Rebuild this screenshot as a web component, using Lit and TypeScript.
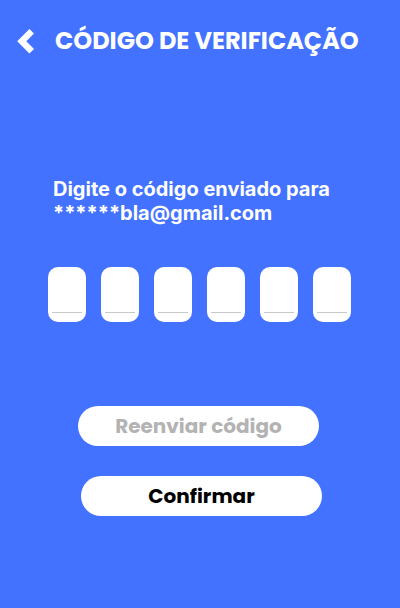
import { LitElement, html, css } from "lit";
import { customElement, state } from "lit/decorators.js";

@customElement("app-root")
export class AppRoot extends LitElement {
  @state() private code: string[] = ["", "", "", "", "", ""];

  static styles = css`
    :host {
      display: block;
      min-height: 100vh;
      box-sizing: border-box;
      background: #4272ff;
      color: #fff;
      font-family: Poppins, Inter, "Open Sans", sans-serif;
    }
    .header {
      display: flex;
      align-items: center;
      gap: 20px;
      padding: 24px 16px 0;
    }
    .back {
      display: block;
      padding: 0;
      border: 0;
      background: none;
      color: inherit;
      cursor: pointer;
    }
    .back svg {
      display: block;
    }
    .title {
      margin: 0;
      font-size: 24px;
      line-height: 34px;
      font-weight: 700;
      white-space: nowrap;
    }
    .form {
      display: flex;
      flex-direction: column;
      align-items: center;
      padding-top: 119px;
    }
    .content {
      display: flex;
      flex-direction: column;
      gap: 42px;
      width: 304px;
    }
    .message {
      margin: 0;
      padding-left: 5px;
      font-family: Inter, sans-serif;
      font-size: 20px;
      line-height: 24px;
      font-weight: 700;
    }
    .code {
      display: flex;
      gap: 15px;
    }
    .cell {
      display: flex;
      align-items: flex-end;
      box-sizing: border-box;
      width: 38px;
      height: 55px;
      padding: 0 4px 9px;
      border-radius: 10px;
      background: #fff;
    }
    .digit {
      box-sizing: border-box;
      width: 100%;
      height: 38px;
      padding: 0;
      border: 0;
      border-bottom: 1px solid #c8c8c8;
      border-radius: 0;
      outline: none;
      background: none;
      color: #000;
      font: 700 24px Inter, sans-serif;
      text-align: center;
    }
    .actions {
      display: flex;
      flex-direction: column;
      gap: 30px;
      width: 244px;
      padding: 84px 0 32px;
    }
    .action {
      width: 241px;
      height: 40px;
      padding: 0;
      border: 0;
      border-radius: 20px;
      background: #fff;
      font-family: inherit;
      font-size: 20px;
      line-height: 30px;
      font-weight: 700;
      cursor: pointer;
    }
    .resend {
      align-self: flex-start;
      color: #b3b3b3;
    }
    .confirm {
      align-self: flex-end;
      color: #000;
    }
  `;

  private onInput(index: number, event: Event) {
    const input = event.target as HTMLInputElement;
    this.code = this.code.map((c, i) => (i === index ? input.value : c));
    if (input.value) {
      this.renderRoot
        .querySelectorAll<HTMLInputElement>(".digit")
        [index + 1]?.focus();
    }
  }

  render() {
    return html`
      <header class="header">
        <button class="back" type="button" aria-label="Voltar">
          <svg width="19" height="26" viewBox="0 0 19 26" aria-hidden="true">
            <path
              d="M13.4 1 L18 5.6 L10.3 13.3 L18 20.9 L13.4 25.5 L1.2 13.3 Z"
              fill="currentColor"
            />
          </svg>
        </button>
        <h1 class="title">CÓDIGO DE VERIFICAÇÃO</h1>
      </header>
      <form class="form" @submit=${(e: Event) => e.preventDefault()}>
        <div class="content">
          <p class="message">
            Digite o código enviado para<br />******bla@gmail.com
          </p>
          <div class="code">
            ${this.code.map(
              (value, i) => html`
                <label class="cell">
                  <input
                    class="digit"
                    type="text"
                    inputmode="numeric"
                    maxlength="1"
                    aria-label="Dígito ${i + 1}"
                    .value=${value}
                    @input=${(e: Event) => this.onInput(i, e)}
                  />
                </label>
              `
            )}
          </div>
        </div>
        <div class="actions">
          <button class="action resend" type="button">Reenviar código</button>
          <button class="action confirm" type="submit">Confirmar</button>
        </div>
      </form>
    `;
  }
}
